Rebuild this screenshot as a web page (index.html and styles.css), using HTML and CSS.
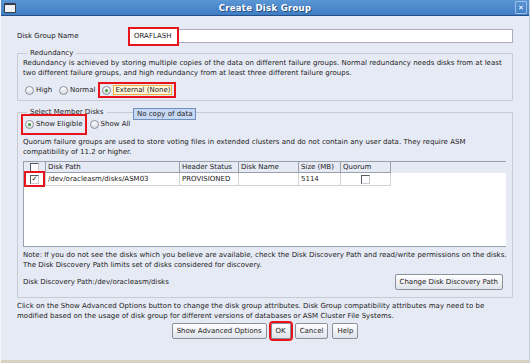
FILE: index.html
```html
<!DOCTYPE html>
<html lang="en">
<head>
    <meta charset="UTF-8">
    <title>Create Disk Group</title>
    <link rel="stylesheet" href="styles.css">
</head>
<body>
    <div class="dialog">
        <div class="titlebar">
            <span class="winIcon"></span>
            <span class="title">Create Disk Group</span>
            <span class="closeBtn">&#x2715;</span>
        </div>
        <div class="content">
            <div class="nameRow">
                <label class="nameLabel">Disk Group Name</label>
                <div class="textField"><span class="mark">ORAFLASH</span></div>
            </div>

            <fieldset class="group redundancy">
                <legend>Redundancy</legend>
                <p class="desc">Redundancy is achieved by storing multiple copies of the data on different failure groups. Normal redundancy needs disks from at least two different failure groups, and high redundancy from at least three different failure groups.</p>
                <div class="radioRow">
                    <span class="radio"><span class="dot"></span>High</span>
                    <span class="radio"><span class="dot"></span>Normal</span>
                    <span class="radio mark"><span class="dot on"></span><span class="focusText">External (None)</span></span>
                </div>
            </fieldset>

            <fieldset class="group members">
                <legend>Select Member Disks</legend>
                <span class="tooltip">No copy of data</span>
                <div class="radioRow">
                    <span class="radio mark tall"><span class="dot on"></span>Show Eligible</span>
                    <span class="radio"><span class="dot"></span>Show All</span>
                </div>
                <p class="desc">Quorum failure groups are used to store voting files in extended clusters and do not contain any user data. They require ASM compatibility of 11.2 or higher.</p>
                <div class="tableWrap">
                    <table class="disks">
                        <tr>
                            <th class="colCheck"><span class="box"></span></th>
                            <th class="colPath">Disk Path</th>
                            <th class="colStatus">Header Status</th>
                            <th class="colName">Disk Name</th>
                            <th class="colSize">Size (MB)</th>
                            <th class="colQuorum">Quorum</th>
                            <th class="colFill"></th>
                        </tr>
                        <tr>
                            <td class="colCheck"><span class="checkMark"><span class="box checked">&#x2713;</span></span></td>
                            <td>/dev/oracleasm/disks/ASM03</td>
                            <td>PROVISIONED</td>
                            <td></td>
                            <td>5114</td>
                            <td class="center"><span class="box"></span></td>
                            <td class="empty"></td>
                        </tr>
                    </table>
                </div>
                <p class="desc note">Note: If you do not see the disks which you believe are available, check the Disk Discovery Path and read/write permissions on the disks. The Disk Discovery Path limits set of disks considered for discovery.</p>
                <div class="pathRow">
                    <span>Disk Discovery Path:/dev/oracleasm/disks</span>
                    <button class="btn">Change Disk Discovery Path</button>
                </div>
            </fieldset>

            <p class="desc advanced">Click on the Show Advanced Options button to change the disk group attributes. Disk Group compatibility attributes may need to be modified based on the usage of disk group for different versions of databases or ASM Cluster File Systems.</p>

            <div class="buttonRow">
                <button class="btn">Show Advanced Options</button>
                <button class="btn okBtn">OK</button>
                <button class="btn">Cancel</button>
                <button class="btn">Help</button>
            </div>
        </div>
        <div class="bottomEdge"></div>
    </div>
</body>
</html>
```

FILE: styles.css
```css
/* Page */
body {
  margin: 0;
  width: 530px;
  height: 363px;
  overflow: hidden;
  background: #e6eaf4;
  font: 7px 'DejaVu Sans', sans-serif;
  color: #222222;
}

.dialog {
  display: flex;
  flex-direction: column;
  height: 363px;
  border-left: 1px solid #f4f6fa;
  border-right: 1px solid #c9cfdc;
  box-sizing: border-box;
}

/* Title bar */
.titlebar {
  position: relative;
  height: 15px;
  display: flex;
  align-items: center;
  justify-content: center;
  background: linear-gradient(#5b96d6, #3f7cc2);
  border-bottom: 1px solid #24508a;
}

.winIcon {
  position: absolute;
  left: 3px;
  top: 3px;
  width: 10px;
  height: 7px;
  background: #eef0f4;
  border: 1px solid #333c4c;
  border-top-width: 2px;
  border-radius: 1px;
}

.title {
  color: #ffffff;
  font-weight: bold;
  font-size: 8.5px;
  letter-spacing: 0.3px;
  text-shadow: 1px 1px 0 #2a4f80;
}

.closeBtn {
  position: absolute;
  right: 2px;
  top: 1px;
  width: 10px;
  height: 11px;
  border: 1px solid #9fc0e6;
  border-radius: 1px;
  color: #ffffff;
  font-size: 7px;
  font-weight: bold;
  display: flex;
  align-items: center;
  justify-content: center;
}

/* Content */
.content {
  flex: 1;
  padding: 12px 16px 0 16px;
}

.nameRow {
  display: flex;
  align-items: center;
  height: 16px;
}

.nameLabel {
  width: 113px;
}

.textField {
  flex: 1;
  height: 14px;
  background: #ffffff;
  border: 1px solid #a8adb6;
  box-sizing: border-box;
  display: flex;
  align-items: center;
}

.mark {
  outline: 2px solid #e8141c;
  outline-offset: 0;
}

.textField .mark {
  height: 15px;
  line-height: 15px;
  padding: 0 6px 0 4px;
  margin-left: -1px;
  background: #ffffff;
}

/* Groups */
.group {
  position: relative;
  margin: 0;
  border: 1px solid #c6cbd4;
  border-radius: 1px;
  padding: 0 5px 4px 5px;
}

.group legend {
  padding: 0 3px;
  margin-left: 4px;
  line-height: 10px;
}

.redundancy {
  margin-top: 4px;
  padding-bottom: 3px;
}

.members {
  margin-top: 6px;
  padding-bottom: 7px;
}

.desc {
  margin: 0;
  line-height: 10px;
  letter-spacing: 0.02px;
}

.radioRow {
  display: flex;
  align-items: center;
  gap: 3px;
  height: 14px;
  margin-top: 5px;
}

.members .radioRow {
  margin-top: -2px;
  height: 18px;
  margin-bottom: 4px;
}

.radio {
  display: flex;
  align-items: center;
  gap: 2px;
  padding: 1px 2px;
}

.radio.tall {
  padding: 4px 2px;
}

.dot {
  width: 9px;
  height: 9px;
  border-radius: 50%;
  border: 1px solid #8a8f98;
  background: linear-gradient(#ffffff, #d8dce4);
  box-sizing: border-box;
  position: relative;
}

.dot.on::after {
  content: "";
  position: absolute;
  left: 2px;
  top: 2px;
  width: 3px;
  height: 3px;
  border-radius: 50%;
  background: #3a9a3a;
}

.focusText {
  border: 1px solid #f0b040;
  background: #fff6d8;
  padding: 0 1px;
}

.tooltip {
  position: absolute;
  left: 115px;
  top: -9px;
  padding: 0 3px;
  line-height: 10px;
  background: #c6d8f2;
  border: 1px solid #6e8fbf;
}

/* Table */
.tableWrap {
  margin-top: 4px;
  height: 84px;
  background: #ffffff;
  border: 1px solid #9aa0aa;
  border-right: none;
  margin-right: 1px;
}

.disks {
  border-collapse: collapse;
  width: 100%;
}

.disks th {
  font-weight: normal;
  text-align: left;
  height: 10px;
  padding: 0 2px;
  background: #e6eaf4;
  border-right: 1px solid #9aa0aa;
  border-bottom: 1px solid #9aa0aa;
  line-height: 10px;
}

.disks td {
  height: 10px;
  padding: 0 2px;
  border-right: 1px solid #d0d4da;
  border-bottom: 1px solid #d0d4da;
  line-height: 10px;
}

.disks td.empty,
.disks th.colFill {
  border: none;
}

.colCheck { width: 14px; text-align: center; }
.disks th.colCheck { text-align: center; }
.colPath { width: 129px; }
.colStatus { width: 54px; }
.colName { width: 55px; }
.colSize { width: 37px; }
.colQuorum { width: 45px; }
.center { text-align: center; }

.box {
  display: inline-block;
  width: 7px;
  height: 7px;
  border: 1px solid #555a62;
  border-right-color: #c8ccd2;
  border-bottom-color: #c8ccd2;
  background: #ffffff;
  vertical-align: middle;
  font-size: 7px;
  line-height: 7px;
  text-align: center;
  font-weight: bold;
  color: #111111;
}

.checkMark {
  display: inline-block;
  outline: 2px solid #e8141c;
  padding: 1px 4px;
}

.note {
  margin-top: 3px;
}

.pathRow {
  display: flex;
  align-items: center;
  justify-content: space-between;
  margin-top: 4px;
  padding-right: 4px;
}

/* Buttons */
.btn {
  font: inherit;
  height: 16px;
  padding: 0 4px;
  color: #222222;
  background: linear-gradient(#ffffff, #dfe3ea);
  border: 1px solid #8c9098;
  border-radius: 2px;
}

.advanced {
  margin-top: 3px;
}

.buttonRow {
  display: flex;
  justify-content: center;
  gap: 4px;
  margin-top: 2px;
}

.okBtn {
  outline: 2px solid #e8141c;
}

.bottomEdge {
  height: 3px;
  background: #d8d2c2;
}
```
